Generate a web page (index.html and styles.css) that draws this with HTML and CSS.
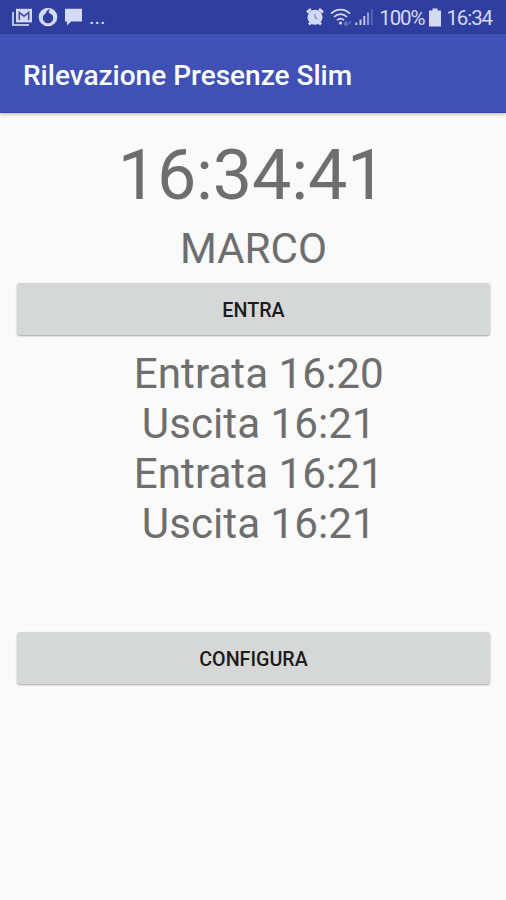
FILE: index.html
```html
<!DOCTYPE html>
<html lang="it">
<head>
  <meta charset="UTF-8">
  <title>Rilevazione Presenze Slim</title>
  <link rel="stylesheet" href="styles.css">
</head>
<body>
  <div class="status-bar">
    <div class="status-left">
      <svg class="icon-mail" width="20" height="18" viewBox="0 0 20 18">
        <path d="M1 4v13h16" fill="none" stroke="#b9c0e8" stroke-width="2"/>
        <path d="M4 0.8h16v13.6H4z" fill="#d5daf4"/>
        <path d="M7.3 12V4.4l4.7 3.8 4.7-3.8V12" fill="none" stroke="#3d4ba6" stroke-width="1.5"/>
      </svg>
      <svg class="icon-ring" width="20" height="20" viewBox="0 0 20 20">
        <circle cx="10" cy="10" r="9.3" fill="#d5daf4"/>
        <path d="M12.8 1.6C9.5 2.6 8 4.8 7.8 6.5 5.8 7.5 4.8 9 4.8 11a5.2 5.2 0 0 0 10.4 0c0-2.7-1.7-4.3-4.4-5 0-2 .7-3.3 2-4.4z" fill="#303f9f"/>
      </svg>
      <svg class="icon-chat" width="19" height="18" viewBox="0 0 19 18">
        <path d="M1 0.8h17v12.7H7.2L3 17.6v-4.1H1z" fill="#d5daf4"/>
      </svg>
      <span class="more">...</span>
    </div>
    <div class="status-right">
      <svg class="icon-alarm" width="18" height="18" viewBox="0 0 18 18">
        <path d="M1 4.4L5 1.2M17 4.4L13 1.2M3 16.6l2.6-2.6M15 16.6l-2.6-2.6" stroke="#d5daf4" stroke-width="2.8"/>
        <circle cx="9" cy="9.2" r="7.5" fill="#d5daf4"/>
        <path d="M9 6v3.5l2.5 1.4" fill="none" stroke="#7d88c8" stroke-width="1.2"/>
      </svg>
      <svg class="icon-wifi" width="22" height="19" viewBox="0 0 22 19">
        <path d="M1 5.6c5.4-5.4 13.6-5.4 19 0M4 9c3.8-3.8 9.2-3.8 13 0M7 12.2c2.2-2.1 4.8-2.1 7 0" fill="none" stroke="#d5daf4" stroke-width="1.7"/>
        <circle cx="10.5" cy="15" r="1.6" fill="#d5daf4"/>
        <path d="M14 15l2-2.5 2 2.5v2.5h-4zM18.5 13.5h3L20 17z" fill="#6571bd"/>
      </svg>
      <svg class="icon-signal" width="18" height="18" viewBox="0 0 18 18">
        <path d="M1.3 14.5V17M5.5 11.5V17M9.3 8V17" stroke="#c0c7ea" stroke-width="2"/>
        <path d="M13 4.5V17" stroke="#929cd3" stroke-width="2"/>
        <path d="M16.8 1V17" stroke="#5462b4" stroke-width="2"/>
      </svg>
      <span class="percent">100%</span>
      <svg class="icon-battery" width="12" height="19" viewBox="0 0 12 19">
        <path d="M3.5 0.5h5v2H12v16H0v-16h3.5z" fill="#d5daf4"/>
      </svg>
      <span class="time">16:34</span>
    </div>
  </div>

  <div class="app-bar">
    <h1>Rilevazione Presenze Slim</h1>
  </div>

  <div class="content">
    <div class="clock">16:34:41</div>
    <div class="name">MARCO</div>
    <button class="btn">ENTRA</button>
    <div class="log">
      <div class="log-row"> Entrata 16:20</div>
      <div class="log-row"> Uscita 16:21</div>
      <div class="log-row"> Entrata 16:21</div>
      <div class="log-row"> Uscita 16:21</div>
    </div>
    <button class="btn">CONFIGURA</button>
  </div>
</body>
</html>
```
FILE: styles.css
```css
body {
  margin: 0;
  height: 900px;
  overflow: hidden;
  background-color: #fafafa;
  font-family: Roboto, sans-serif;
  color: #6e6e6e;
}

.status-bar {
  display: flex;
  justify-content: space-between;
  height: 34px;
  padding: 0 14px 0 12px;
  background-color: #303f9f;
  color: #d5daf4;
}

.status-left,
.status-right {
  display: flex;
  align-items: center;
}

.icon-ring {
  margin-left: 6px;
}

.icon-chat {
  margin-left: 6px;
}

.more {
  margin-left: 6px;
  font-size: 21px;
}

.icon-wifi {
  margin-left: 6px;
}

.icon-signal {
  margin-left: 3px;
}

.percent {
  margin-left: 6px;
}

.icon-battery {
  margin: 0 5px 0 5px;
}

.percent,
.time {
  font-size: 20.5px;
  line-height: 34px;
  letter-spacing: -1.1px;
  padding-top: 2px;
}

.app-bar {
  display: flex;
  align-items: center;
  box-sizing: border-box;
  height: 79px;
  padding: 5px 0 0 23px;
  background-color: #3f51b5;
  border-bottom: 1px solid #3447a8;
  box-shadow: 0 1px 4px rgba(0,0,0,0.3);
}

.app-bar h1 {
  margin: 0;
  font-size: 28px;
  font-weight: 500;
  color: #fff;
}

.content {
  padding: 21px 16px 0 17px;
  text-align: center;
}

.clock {
  margin-right: 3px;
  font-size: 70px;
  line-height: 82px;
  letter-spacing: -0.2px;
}

.name {
  margin-top: 8px;
  font-size: 42.2px;
  line-height: 50px;
}

.btn {
  display: block;
  width: 100%;
  height: 52px;
  margin-top: 9px;
  padding: 2px 0 0;
  border: none;
  border-radius: 3px;
  background-color: #d6d7d7;
  box-shadow: 0 1px 2px rgba(0,0,0,0.35);
  font-family: inherit;
  font-size: 19.7px;
  font-weight: 500;
  color: #1c1c1c;
}

.log {
  height: 283px;
  margin-top: 14px;
  font-size: 42.2px;
  line-height: 50px;
}

/* keeps the leading space of each entry */
.log-row {
  white-space: pre;
}

.log + .btn {
  margin-top: 0;
}
```
